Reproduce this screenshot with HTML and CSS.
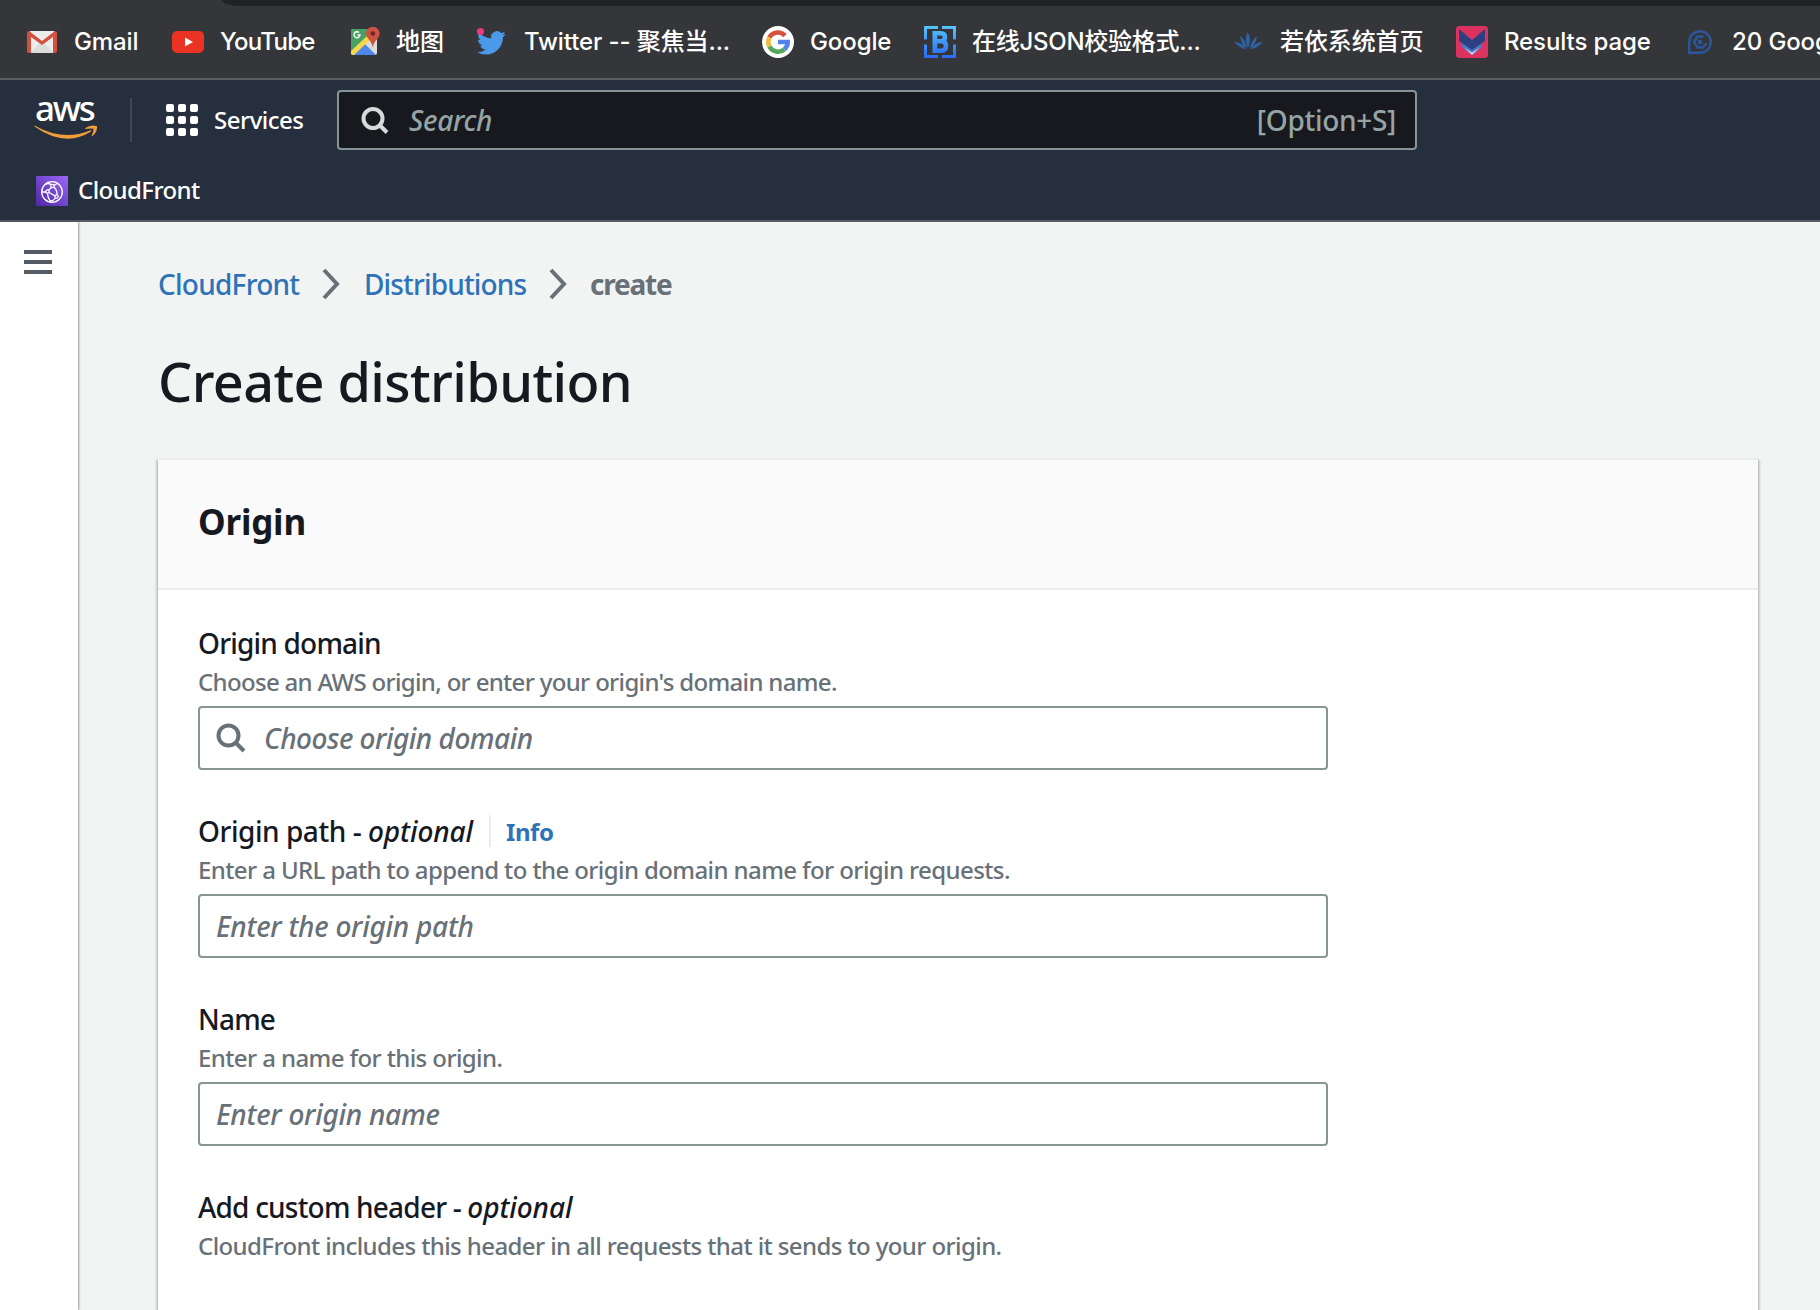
FILE: index.html
```html
<!DOCTYPE html>
<html lang="en">
<head>
<meta charset="utf-8">
<title>Create distribution</title>
<link rel="stylesheet" href="styles.css">
</head>
<body>
<div class="tab-strip"><div class="tab-strip-edge"></div></div>
<nav class="bookmarks">
  <a class="bookmark"><svg class="bm-icon" viewBox="0 0 32 32"><path d="M4 5h24v22H4z" fill="#ececec"/><path d="M4 27l12-12 12 12z" fill="#dcdcdc"/><path d="M1 7q0-2 2-2l13 10L29 5q2 0 2 2v18q0 2-2 2h-2V11L16 19 5 11v16H3q-2 0-2-2z" fill="#d2503f"/></svg><span>Gmail</span></a>
  <a class="bookmark"><svg class="bm-icon" viewBox="0 0 32 32"><rect y="5" width="32" height="22" rx="5" fill="#ea3323"/><path d="M13 11.500l8 4.500-8 4.500z" fill="#fff"/></svg><span class="bm-tight">YouTube</span></a>
  <a class="bookmark bm-near"><svg class="bm-icon" viewBox="0 0 32 32"><rect x="1" y="3" width="26" height="26" rx="2" fill="#dcdcdc"/><path d="M1 26V5q0-2 2-2h19v4z" fill="#48a065"/><path d="M2 29l12-12 12 12z" fill="#4e86ec"/><path d="M1 25L18 9l3 4L4 29H3q-2 0-2-2z" fill="#f6d74b"/><path d="M9 6.500A3 3 0 1 0 10 9H7.500" fill="none" stroke="#fff" stroke-width="1.400"/><path d="M16 7.500a6.800 6.800 0 0 1 13.600 0c0 5-5.200 6-6.800 14-1.600-8-6.800-9-6.800-14z" fill="#cc5242"/><circle cx="22.800" cy="7.500" r="2.300" fill="#702a22"/></svg><span>地图</span></a>
  <a class="bookmark"><svg class="bm-icon" viewBox="0 0 32 32"><path transform="translate(1 2.500) scale(1.200)" d="M23.950 4.570a10 10 0 0 1-2.820.770 4.960 4.960 0 0 0 2.160-2.720c-.950.550-2 .960-3.130 1.180a4.920 4.920 0 0 0-8.380 4.480C7.690 8.090 4.070 6.130 1.640 3.160a4.930 4.930 0 0 0 1.520 6.570 4.900 4.900 0 0 1-2.230-.610v.060a4.930 4.930 0 0 0 3.950 4.830 5 5 0 0 1-2.210.080 4.940 4.940 0 0 0 4.600 3.420A9.870 9.870 0 0 1 0 19.540a14 14 0 0 0 7.550 2.210c9.050 0 14-7.500 14-13.980 0-.210 0-.420-.020-.630a9.940 9.940 0 0 0 2.460-2.550z" fill="#4b99e9"/><circle cx="4.500" cy="5.500" r="3.600" fill="#ea3b7c"/></svg><span>Twitter -- 聚焦当...</span></a>
  <a class="bookmark"><svg class="bm-icon" viewBox="0 0 32 32"><circle cx="16" cy="16" r="16" fill="#fff"/><g fill="none" stroke-width="4.600"><path d="M23 9.600A9.700 9.700 0 0 0 7.400 11.500" stroke="#d85040"/><path d="M7.400 11.500a9.700 9.700 0 0 0 0 9" stroke="#f0bb3f"/><path d="M7.400 20.500A9.700 9.700 0 0 0 22.500 23.200" stroke="#58a55c"/><path d="M22.500 23.200A9.700 9.700 0 0 0 25.700 16H16" stroke="#5383ec"/></g></svg><span>Google</span></a>
  <a class="bookmark"><svg class="bm-icon" viewBox="0 0 32 32"><defs><linearGradient id="bg" x1="0" y1="0" x2="0" y2="32" gradientUnits="userSpaceOnUse"><stop offset="0" stop-color="#56c4fa"/><stop offset="1" stop-color="#2b6af5"/></linearGradient></defs><path d="M14 1.500H1.500v12M18 1.500h12.500v12M14 30.500H1.500v-12M18 30.500h12.500v-12" fill="none" stroke="url(#bg)" stroke-width="3"/><path fill="none" stroke="url(#bg)" stroke-width="4.600" d="M11 7.300h5.500q4.500 0 4.500 4t-4.500 4H11h6q5 0 5 4.600t-5 4.800h-6zM10.800 5v22"/></svg><span class="bm-snug">在线JSON校验格式...</span></a>
  <a class="bookmark"><svg class="bm-icon" viewBox="0 0 32 32"><g fill="#2f62a6"><path d="M16 22q-4-8-.500-16 4.500 7 .500 16zM15 23Q9 18 8 10q6 4 7 13zM18 23q6-5 7-13-6 4-7 13zM14 23.500Q8 22 2 16q9 0 12 7.500zM19 23.500q6-1.500 12-7.500-9 0-12 7.500z"/></g></svg><span>若依系统首页</span></a>
  <a class="bookmark"><svg class="bm-icon" viewBox="0 0 32 32"><rect width="32" height="32" rx="3.500" fill="#dc3260"/><path d="M6 14l10 8 10-8v7l-10 8-10-8z" fill="#4d76c9"/><path d="M8 21.500l8 5 8-5-8 7.500z" fill="#c4d5f0"/><path d="M3 3l13 11L29 3v12L16 24 3 15z" fill="#2d3f80"/></svg><span>Results page</span></a>
  <a class="bookmark"><svg class="bm-icon" viewBox="0 0 32 32"><g fill="none" stroke="#2a569c" stroke-width="2.400"><path d="M5.200 26.800V16A10.800 10.800 0 1 1 16 26.800z"/><path d="M19.500 10.500h-6L10 16l3.500 5.500h5.500l3.500-4.500"/></g><circle cx="16" cy="16" r="2.400" fill="#2a569c"/></svg><span>20 Google</span></a>
</nav>
<header class="aws-nav">
  <div class="nav-main">
    <div class="aws-logo"><span class="aws-word">aws</span><svg class="aws-smile" viewBox="0 0 64 16"><path d="M.500 1.500Q0 .500 1.500 1Q29 16.500 56 5.500q2-.600 1 1Q31 23 .500 1.500z" fill="#f19e39"/><path d="M51 3.200Q57-1 63 1.200 63.500 6.500 58.500 11q-1 .500-.800-.500Q60 6 59.300 3.800 57 2.900 51.500 4z" fill="#f19e39"/></svg></div>
    <div class="nav-divider"></div>
    <svg class="grid-icon" viewBox="0 0 32 32" fill="#fff"><rect width="8" height="8" rx="2"/><rect x="12" width="8" height="8" rx="2"/><rect x="24" width="8" height="8" rx="2"/><rect y="12" width="8" height="8" rx="2"/><rect x="12" y="12" width="8" height="8" rx="2"/><rect x="24" y="12" width="8" height="8" rx="2"/><rect y="24" width="8" height="8" rx="2"/><rect x="12" y="24" width="8" height="8" rx="2"/><rect x="24" y="24" width="8" height="8" rx="2"/></svg>
    <span class="services">Services</span>
    <div class="nav-search">
      <svg class="nav-search-icon" viewBox="0 0 28 28" fill="none" stroke="#d5dbdb" stroke-width="4"><circle cx="12" cy="12.500" r="9.500"/><path d="M18.500 19L26 26.500"/></svg>
      <span class="nav-placeholder">Search</span><span class="shortcut">[Option+S]</span>
    </div>
  </div>
  <div class="nav-favorites">
    <svg class="cf-icon" viewBox="0 0 32 30"><defs><linearGradient id="cf" x1="0" y1="1" x2="1" y2="0"><stop stop-color="#4d27a8"/><stop offset="1" stop-color="#9b66f6"/></linearGradient></defs><rect width="32" height="30" fill="url(#cf)"/><g fill="none" stroke="#fff" stroke-width="1.300"><circle cx="16" cy="16" r="10.300"/><circle cx="16.500" cy="10" r="1.700"/><circle cx="11.500" cy="15.500" r="1.700"/><circle cx="20.500" cy="20.500" r="1.700"/><path d="M15.500 11.500L12.500 14M18 11q3.500 3.500 2.800 7.800M13 16.500l6 3.500M11.500 17.500q0 4 3 8M6 16h4M9 8.500q3-2 6 0M18 9.500l3-2M14 25.500q4-1 5.500-3.500"/></g></svg>
    <span class="favorite">CloudFront</span>
  </div>
</header>
<div class="layout">
  <aside class="side"><div class="burger"><i></i><i></i><i></i></div></aside>
  <main class="content">
    <div class="breadcrumbs">
      <a class="crumb crumb-root">CloudFront</a>
      <svg class="chevron" viewBox="0 0 18 32"><path d="M2 2l13 14L2 30" fill="none" stroke="#687078" stroke-width="4"/></svg>
      <a class="crumb crumb-list">Distributions</a>
      <svg class="chevron" viewBox="0 0 18 32"><path d="M2 2l13 14L2 30" fill="none" stroke="#687078" stroke-width="4"/></svg>
      <span class="crumb-current">create</span>
    </div>
    <h1 class="title">Create distribution</h1>
    <section class="card">
      <div class="card-head"><h2 class="card-title">Origin</h2></div>
      <div class="card-body">
        <div class="field">
          <div class="label"><span>Origin domain</span></div>
          <div class="hint hint-tight">Choose an AWS origin, or enter your origin's domain name.</div>
          <div class="input"><svg class="input-icon" viewBox="0 0 30 30" fill="none" stroke="#687078" stroke-width="4"><circle cx="12.500" cy="12.500" r="10"/><path d="M19.500 19.500L28 28"/></svg><span class="placeholder placeholder-search">Choose origin domain</span></div>
        </div>
        <div class="field">
          <div class="label label-info"><span>Origin path - <em>optional</em></span><a class="info">Info</a></div>
          <div class="hint">Enter a URL path to append to the origin domain name for origin requests.</div>
          <div class="input"><span class="placeholder">Enter the origin path</span></div>
        </div>
        <div class="field">
          <div class="label"><span>Name</span></div>
          <div class="hint">Enter a name for this origin.</div>
          <div class="input"><span class="placeholder">Enter origin name</span></div>
        </div>
        <div class="field">
          <div class="label"><span>Add custom header - <em>optional</em></span></div>
          <div class="hint">CloudFront includes this header in all requests that it sends to your origin.</div>
        </div>
      </div>
    </section>
  </main>
</div>
</body>
</html>
```
FILE: styles.css
```css
* { box-sizing: border-box; }
body { margin: 0; width: 1820px; height: 1310px; overflow: hidden; background: #f2f3f3; color: #16191f; font-family: "Noto Sans", "Open Sans", sans-serif; font-weight: 500; }
svg { display: block; flex: none; }
.tab-strip { height: 6px; background: #35363a; overflow: hidden; }
.tab-strip-edge { height: 6px; margin-left: 222px; background: #202124; border-bottom-left-radius: 18px 6px; }
.bookmarks { height: 74px; padding: 0 0 0 26px; background: #35363a; border-bottom: 2px solid #5c5d60; display: grid; grid-template-columns: 146px 178px 126px 286px 162px 308px 224px 228px 200px; overflow: hidden; }
.bookmark { display: flex; align-items: center; gap: 16px; height: 72px; color: #fff; white-space: nowrap; font: 450 24px/36px Inter, "Noto Sans CJK SC", sans-serif; letter-spacing: -.1px; }
.bm-near { gap: 14px; }
.bm-tight { letter-spacing: -.7px; }
.bm-snug { letter-spacing: -.25px; }
.bm-icon { width: 32px; height: 32px; }
.aws-nav { height: 142px; background: #262f3e; border-bottom: 2px solid #575d66; color: #fff; }
.nav-main { height: 80px; padding-left: 34px; display: flex; align-items: center; }
.aws-logo { width: 64px; height: 60px; }
.aws-word { display: block; height: 35px; line-height: 36px; padding-left: 1px; font-size: 35px; letter-spacing: -2.2px; }
.aws-smile { width: 64px; height: 16px; }
.nav-divider { width: 2px; height: 44px; margin: 0 34px 0 32px; background: #414853; }
.grid-icon { width: 32px; height: 32px; }
.services { margin-left: 16px; width: 123px; padding-bottom: 2px; font-size: 24px; letter-spacing: -.5px; }
.nav-search { width: 1080px; height: 60px; padding: 0 19px 0 22px; display: flex; align-items: center; border: 2px solid #879596; border-radius: 4px; background: #18191e; color: #95a5a6; font-size: 28px; }
.nav-search-icon { width: 28px; height: 28px; }
.nav-placeholder { margin-left: 20px; font-style: italic; letter-spacing: -.3px; }
.shortcut { margin-left: auto; letter-spacing: -.3px; }
.nav-favorites { display: flex; align-items: center; gap: 10px; height: 62px; padding-left: 36px; }
.cf-icon { width: 32px; height: 30px; }
.favorite { padding-bottom: 3px; font-size: 24px; letter-spacing: -.6px; }
.layout { display: flex; height: 1088px; }
.side { width: 78px; background: #fff; padding: 28px 0 0 24px; box-shadow: 1px 0 2px rgba(0, 28, 36, .4); z-index: 1; }
.burger { display: flex; flex-direction: column; gap: 6px; width: 28px; }
.burger i { height: 4px; background: #545b64; }
.content { width: 1742px; padding: 41px 62px 0 80px; background: #f2f3f3; }
.breadcrumbs { display: flex; align-items: center; height: 42px; font-size: 28px; }
.crumb { color: #2e73b8; letter-spacing: -.75px; }
.crumb-root { width: 164px; }
.crumb-list { width: 185px; margin-left: 24px; letter-spacing: -.85px; }
.chevron { width: 18px; height: 32px; }
.crumb-current { margin-left: 23px; font-weight: 700; letter-spacing: -1.2px; color: #687078; }
.title { margin: 36px 0 37px; height: 80px; line-height: 80px; font-size: 54px; font-weight: 500; letter-spacing: -.6px; }
.card { height: 880px; background: #fff; border-top: 2px solid #eaeded; box-shadow: 0 2px 2px rgba(0, 28, 36, .3), 2px 2px 2px rgba(0, 28, 36, .15), -2px 2px 2px rgba(0, 28, 36, .15); }
.card-head { height: 130px; padding: 37px 40px 0; background: #fafafa; border-bottom: 2px solid #eaeded; }
.card-title { margin: 0; font-size: 35px; line-height: 50px; font-weight: 700; letter-spacing: -.2px; }
.card-body { padding: 32px 40px; display: flex; flex-direction: column; gap: 40px; }
.label { display: flex; align-items: center; height: 42px; font-size: 28px; line-height: 42px; letter-spacing: -.8px; }
.label em { letter-spacing: -.1px; }
.label-info { letter-spacing: -.45px; }
.info { height: 32px; margin-left: 16px; padding-left: 15px; border-left: 2px solid #eaeded; color: #2e73b8; font-size: 24px; line-height: 33px; font-weight: 700; }
.hint { height: 36px; line-height: 36px; font-size: 24px; letter-spacing: -.6px; color: #687078; white-space: nowrap; }
.hint-tight { letter-spacing: -.68px; }
.input { width: 1130px; height: 64px; margin-top: 6px; padding-left: 16px; display: flex; align-items: center; border: 2px solid #879596; border-radius: 4px; background: #fff; }
.input-icon { width: 30px; height: 30px; margin-right: 18px; }
.placeholder { font-size: 28px; font-style: italic; letter-spacing: -.27px; color: #687078; }
.placeholder-search { letter-spacing: -.5px; }
```
